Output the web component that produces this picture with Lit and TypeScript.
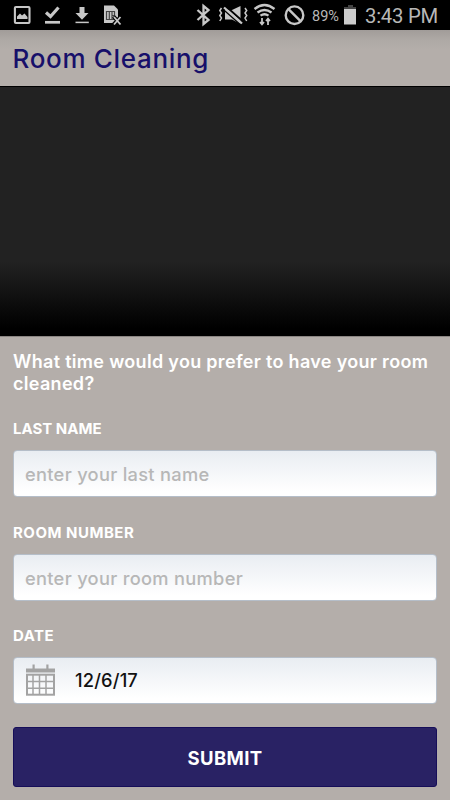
import { LitElement, html, css, svg } from "lit";
import { customElement } from "lit/decorators.js";

const columns = [8, 14.5, 21];

@customElement("app-root")
class AppRoot extends LitElement {
  static styles = css`
    :host { display: flex; flex-direction: column; width: 450px; height: 800px; overflow: hidden; background: #b4aeaa; font-family: Inter, "Open Sans", sans-serif; }
    * { box-sizing: border-box; }
    svg { display: block; }
    .status { height: 30px; flex: none; background: #000; display: flex; font-family: Roboto, sans-serif; color: #c4c4c4; }
    .icons { flex: none; width: 308px; height: 30px; }
    .pct { width: 35px; padding-left: 4px; font-size: 14.5px; line-height: 33px; white-space: nowrap; color: #b8b8b8; }
    .battery { width: 18px; height: 30px; }
    .clock { font-size: 20.3px; line-height: 32px; padding-left: 4px; letter-spacing: -.25px; white-space: nowrap; color: #b8b8b8; }
    .head { height: 57px; flex: none; background: linear-gradient(#a19c99, #aea9a5 10px, #b4aeaa 20px); border-bottom: 1px solid #000; padding-left: 12.5px; }
    h1 { margin: 0; color: #17106a; font-size: 26px; font-weight: 530; line-height: 58px; letter-spacing: .68px; white-space: nowrap; }
    .photo { height: 249px; flex: none; background: linear-gradient(#222 0 70%, #000 97%); }
    .form { flex: 1; padding: 14px 13px 0; border-top: 1px solid #8b8683; color: #fff; display: flex; flex-direction: column; }
    .question { margin: 0; font-size: 18px; line-height: 22.3px; font-weight: 600; letter-spacing: .31px; height: 66.3px; white-space: nowrap; }
    .group { height: 103.3px; flex: none; }
    label { display: block; font-size: 15px; font-weight: 700; line-height: 24.5px; height: 33px; white-space: nowrap; }
    .wide { letter-spacing: .5px; }
    .field { height: 47px; border: 1px solid #b5bec9; border-radius: 4px; background: linear-gradient(#e9edf2, #fff 90%); display: flex; align-items: center; padding: 1px 0 0 11px; font-size: 18.3px; font-weight: 500; letter-spacing: .28px; color: #b7b7b7; white-space: nowrap; }
    .date { color: #111; padding-top: 0; letter-spacing: .15px; }
    .date svg { margin-right: 20px; flex: none; }
    .submit { display: block; width: 424px; height: 60px; border: 1px solid #160e59; border-radius: 3px; background: #292264; color: #fff; font: 700 18.5px Inter, sans-serif; letter-spacing: .4px; padding: 1px 0 0; flex: none; }
  `;

  render() {
    return html`
      <div class="status">
        <svg class="icons" viewBox="0 0 308 30" fill="none" stroke="#c7c7c7">
          <rect x="14.9" y="7" width="14.6" height="16" rx="1" stroke-width="2.1"/>
          <path d="M17 19v-2.500l3-3 2 2 2.500-2 3 3.500v2z" fill="#c7c7c7" stroke="none"/>
          <path d="M46 12.500l4.500 4L58.500 7.500" stroke-width="3.200"/><path d="M45 22.300h15" stroke-width="2.700"/>
          <path d="M79.500 7h5v6h4L82 19.700 75.500 13h4z" fill="#c7c7c7" stroke="none"/><path d="M75.500 22.400h13.300" stroke-width="1.500"/>
          <path d="M104 5.500h10l4 4V23h-14z" fill="#c7c7c7" stroke="none"/>
          <path d="M106.500 11.500h8v8h-8zM109.300 12v7M112 12v7M112 15.500h2" stroke="#444" stroke-width="1.200"/>
          <path d="M113.500 16.500l7.500 8m0-8l-7.500 8" stroke="#000" stroke-width="4"/>
          <path d="M114 17l6.500 7.500m0-7.500L114 24.500" stroke-width="1.800"/>
          <path d="M197.500 10l11 10-5 4V6l5 4-11 10" stroke-width="2.300"/>
          <path d="M221.500 8l-1.700 2.500L221.500 13l-1.700 2.500L221.500 18l-1.700 3M245 8l1.700 2.500L245 13l1.700 2.500L245 18l1.700 3" stroke-width="1.500"/>
          <path d="M225 10h7l8.500-4v18L232 19.500h-7z" fill="#c7c7c7" stroke="none"/>
          <path d="M225.500 6l18 16" stroke="#000" stroke-width="2"/><path d="M224 7.500l18 16" stroke-width="2.300"/><path d="M223 9.200l18 16" stroke="#000" stroke-width="1.300"/>
          <path d="M254.500 9q10-8 20 0M257.500 12.500q7-5 14 0M260.500 15.700q4-3 8 0" stroke-width="2.300"/>
          <path d="M262 18v6m-2-2l2 2.300 2-2.300M268 25v-6m-2 2l2-2.300 2 2.300" stroke-width="1.800"/>
          <circle cx="294.500" cy="15.200" r="8.800" stroke-width="2.400"/><path d="M288.500 9.200l12 12" stroke-width="2.400"/>
        </svg>
        <span class="pct">89%</span>
        <svg class="battery" viewBox="0 0 18 30"><path d="M5 5h5v2H5z" fill="#444"/><path d="M1 7h12v2H1z" fill="#444"/><path d="M1 9h12v15.500H1z" fill="#ccc"/></svg>
        <span class="clock">3:43 PM</span>
      </div>
      <header class="head"><h1>Room Cleaning</h1></header>
      <div class="photo"></div>
      <main class="form">
        <p class="question">What time would you prefer to have your room<br>cleaned?</p>
        <div class="group"><label>LAST NAME</label><div class="field">enter your last name</div></div>
        <div class="group"><label class="wide">ROOM NUMBER</label><div class="field">enter your room number</div></div>
        <div class="group"><label class="wide">DATE</label><div class="field date">
          <svg width="30" height="34" viewBox="0 0 30 34" fill="none" stroke="#a3a3a3">
            <path d="M1 5.500h29v4H1zM7.500 1.500h2.200v4h-2.200zM21.300 1.500h2.200v4h-2.200z" fill="#a3a3a3" stroke="none"/>
            <rect x="2" y="11.700" width="27" height="20" stroke-width="2"/>
            ${columns.map(x => svg`<path d="M${x} 12v20" stroke-width="1.500"/>`)}
            <path d="M1 18.500h28M1 25.200h28" stroke-width="1.500"/>
          </svg><span>12/6/17</span></div></div>
        <button class="submit">SUBMIT</button>
      </main>`;
  }
}
